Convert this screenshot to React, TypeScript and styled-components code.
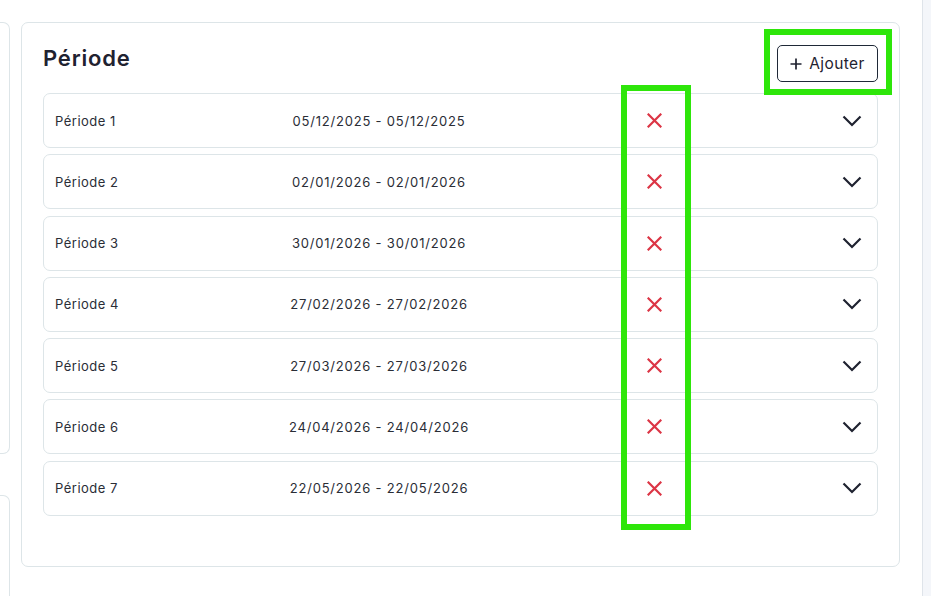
import React from 'react';
import styled, { createGlobalStyle } from 'styled-components';

const periods = [
  { label: 'Période 1', range: '05/12/2025 - 05/12/2025' },
  { label: 'Période 2', range: '02/01/2026 - 02/01/2026' },
  { label: 'Période 3', range: '30/01/2026 - 30/01/2026' },
  { label: 'Période 4', range: '27/02/2026 - 27/02/2026' },
  { label: 'Période 5', range: '27/03/2026 - 27/03/2026' },
  { label: 'Période 6', range: '24/04/2026 - 24/04/2026' },
  { label: 'Période 7', range: '22/05/2026 - 22/05/2026' },
];

const GlobalStyle = createGlobalStyle`
  html, body {
    margin: 0;
    padding: 0;
    background: #ffffff;
    font-family: Inter, "Noto Sans", sans-serif;
    color: #1f2230;
  }
`;

const Page = styled.div`
  position: relative;
  display: flex;
  align-items: flex-start;
  height: 596px;
  overflow: hidden;
`;

const SideColumn = styled.div`
  width: 10px;
  flex: none;
  display: flex;
  flex-direction: column;
  gap: 41px;
  padding-top: 22px;
`;

const SideCard = styled.div<{ $h: number }>`
  height: ${(p) => p.$h}px;
  border: 1px solid #dde5e8;
  border-left: none;
  border-radius: 0 7px 7px 0;
`;

const Card = styled.section`
  flex: none;
  width: 879px;
  box-sizing: border-box;
  margin: 22px 0 0 11px;
  height: 545px;
  padding: 22px 21px 0;
  border: 1px solid #dde5e8;
  border-radius: 7px;
`;

const Header = styled.div`
  display: flex;
  justify-content: space-between;
  align-items: flex-start;
  margin-bottom: 11px;
`;

const Title = styled.h2`
  margin: 0;
  font-size: 22px;
  font-weight: 600;
  letter-spacing: 0.8px;
  color: #1f2230;
`;

const AddButton = styled.button`
  display: flex;
  align-items: center;
  gap: 7px;
  height: 37px;
  width: 101px;
  justify-content: center;
  background: #fff;
  border: 1px solid #1f2937;
  border-radius: 5px;
  font-family: inherit;
  font-size: 15.5px;
  letter-spacing: 0.4px;
  color: #1f2230;
  padding: 0 6px;
`;

const List = styled.div`
  display: flex;
  flex-direction: column;
  gap: 6.3px;
`;

const Row = styled.div`
  display: grid;
  grid-template-columns: 180px 288px 262px 1fr;
  align-items: center;
  height: 55px;
  box-sizing: border-box;
  padding: 0 15px 0 11px;
  border: 1px solid #dde5e8;
  border-radius: 7px;
  font-size: 13px;
  color: #2a2d36;
`;

const Label = styled.span`
  letter-spacing: 0.5px;
`;

const Range = styled.span`
  text-align: center;
  letter-spacing: 0.8px;
`;

const Remove = styled.span`
  display: flex;
  justify-content: center;
`;

const Toggle = styled.span`
  display: flex;
  justify-content: flex-end;
`;

const ScrollStrip = styled.div`
  flex: none;
  margin-left: 22px;
  width: 9px;
  height: 596px;
  background: #f4f6fa;
  border-left: 1px solid #dfe4ea;
`;

const Highlight = styled.div<{ $x: number; $y: number; $w: number; $h: number }>`
  position: absolute;
  left: ${(p) => p.$x}px;
  top: ${(p) => p.$y}px;
  width: ${(p) => p.$w}px;
  height: ${(p) => p.$h}px;
  box-sizing: border-box;
  border: 6px solid #2ee60a;
  pointer-events: none;
`;

const CrossIcon = () => (
  <svg width="15" height="15" viewBox="0 0 15 15">
    <path d="M1.5 1.5 L13.5 13.5 M13.5 1.5 L1.5 13.5" stroke="#dc3545" strokeWidth="2.2" strokeLinecap="square" />
  </svg>
);

const ChevronIcon = () => (
  <svg width="20" height="12" viewBox="0 0 20 12">
    <path d="M1.5 1.5 L10 10 L18.5 1.5" fill="none" stroke="#1f2230" strokeWidth="2.2" />
  </svg>
);

const PlusIcon = () => (
  <svg width="12" height="12" viewBox="0 0 12 12">
    <path d="M6 0.5 V11.5 M0.5 6 H11.5" stroke="#1f2230" strokeWidth="1.7" />
  </svg>
);

export default function App() {
  return (
    <>
      <GlobalStyle />
      <Page>
        <SideColumn>
          <SideCard $h={430} />
          <SideCard $h={200} />
        </SideColumn>
        <Card>
          <Header>
            <Title>Période</Title>
            <AddButton>
              <PlusIcon />
              Ajouter
            </AddButton>
          </Header>
          <List>
            {periods.map((p) => (
              <Row key={p.label}>
                <Label>{p.label}</Label>
                <Range>{p.range}</Range>
                <Remove>
                  <CrossIcon />
                </Remove>
                <Toggle>
                  <ChevronIcon />
                </Toggle>
              </Row>
            ))}
          </List>
        </Card>
        <ScrollStrip />
        <Highlight $x={764} $y={29} $w={128} $h={66} />
        <Highlight $x={621} $y={85} $w={70} $h={445} />
      </Page>
    </>
  );
}
